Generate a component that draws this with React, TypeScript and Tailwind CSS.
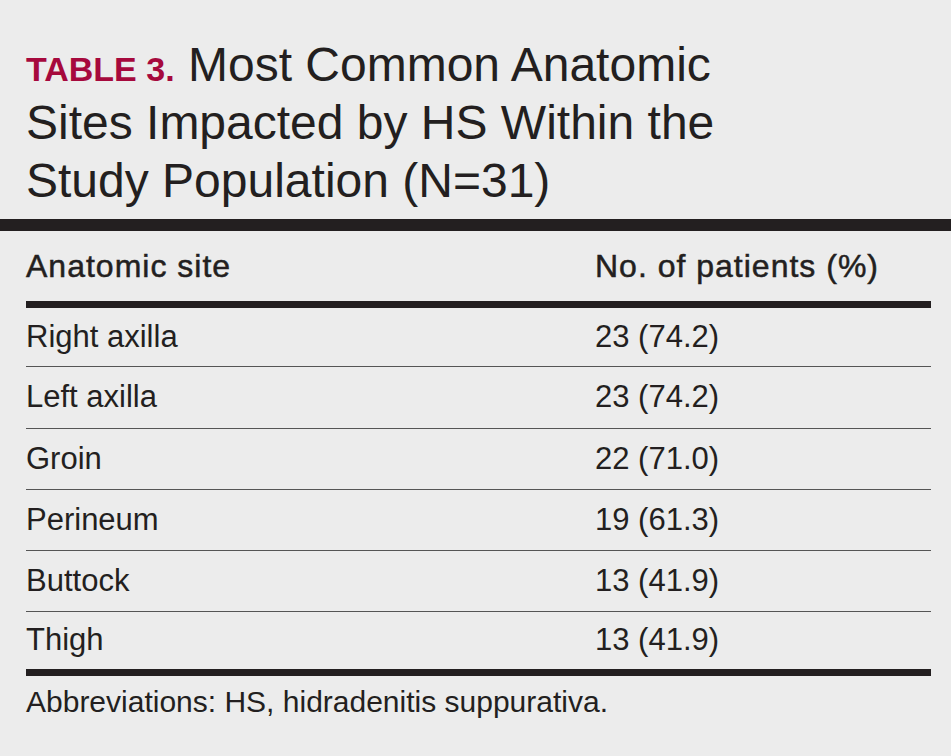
import React from "react";

const rows: [string, string][] = [
  ["Right axilla", "23 (74.2)"],
  ["Left axilla", "23 (74.2)"],
  ["Groin", "22 (71.0)"],
  ["Perineum", "19 (61.3)"],
  ["Buttock", "13 (41.9)"],
  ["Thigh", "13 (41.9)"],
];

const rowH = ["h-[59px]", "h-[62px]", "h-[61px]", "h-[61px]", "h-[61px]", "h-[57px]"];

export default function App() {
  return (
    <div
      className="w-[951px] h-[756px] bg-[#ececec] text-[#231f20] overflow-hidden"
      style={{ fontFamily: '"Liberation Sans", Arial, sans-serif' }}
    >
      <div className="pl-[26px] pt-[36px] text-[48px] leading-[58px]">
        <div className="h-[58px]">
          <span className="text-[#a6093d] font-bold text-[34px] leading-[0]">TABLE 3.</span>{" "}
          Most Common Anatomic
        </div>
        <div className="h-[58px]">Sites Impacted by HS Within the</div>
        <div className="h-[58px]">Study Population (N=31)</div>
      </div>
      <div className="mt-[9px] h-[12px] bg-[#231f20]" />
      <div className="ml-[26px] w-[905px]">
        <div className="flex h-[70px] items-center text-[32px] tracking-[1px] [-webkit-text-stroke:0.5px_#231f20]">
          <div className="w-[569px]">Anatomic site</div>
          <div>No. of patients (%)</div>
        </div>
        <div className="h-[7px] bg-[#231f20]" />
        {rows.map(([site, n], i) => (
          <div
            key={site}
            className={
              "flex items-center text-[31px] " +
              rowH[i] +
              (i < rows.length - 1 ? " border-b border-[#555]" : "")
            }
          >
            <div className="w-[569px]">{site}</div>
            <div>{n}</div>
          </div>
        ))}
        <div className="h-[7px] bg-[#231f20]" />
        <div className="pt-[8px] text-[30px] leading-[36px]">
          Abbreviations: HS, hidradenitis suppurativa.
        </div>
      </div>
    </div>
  );
}
